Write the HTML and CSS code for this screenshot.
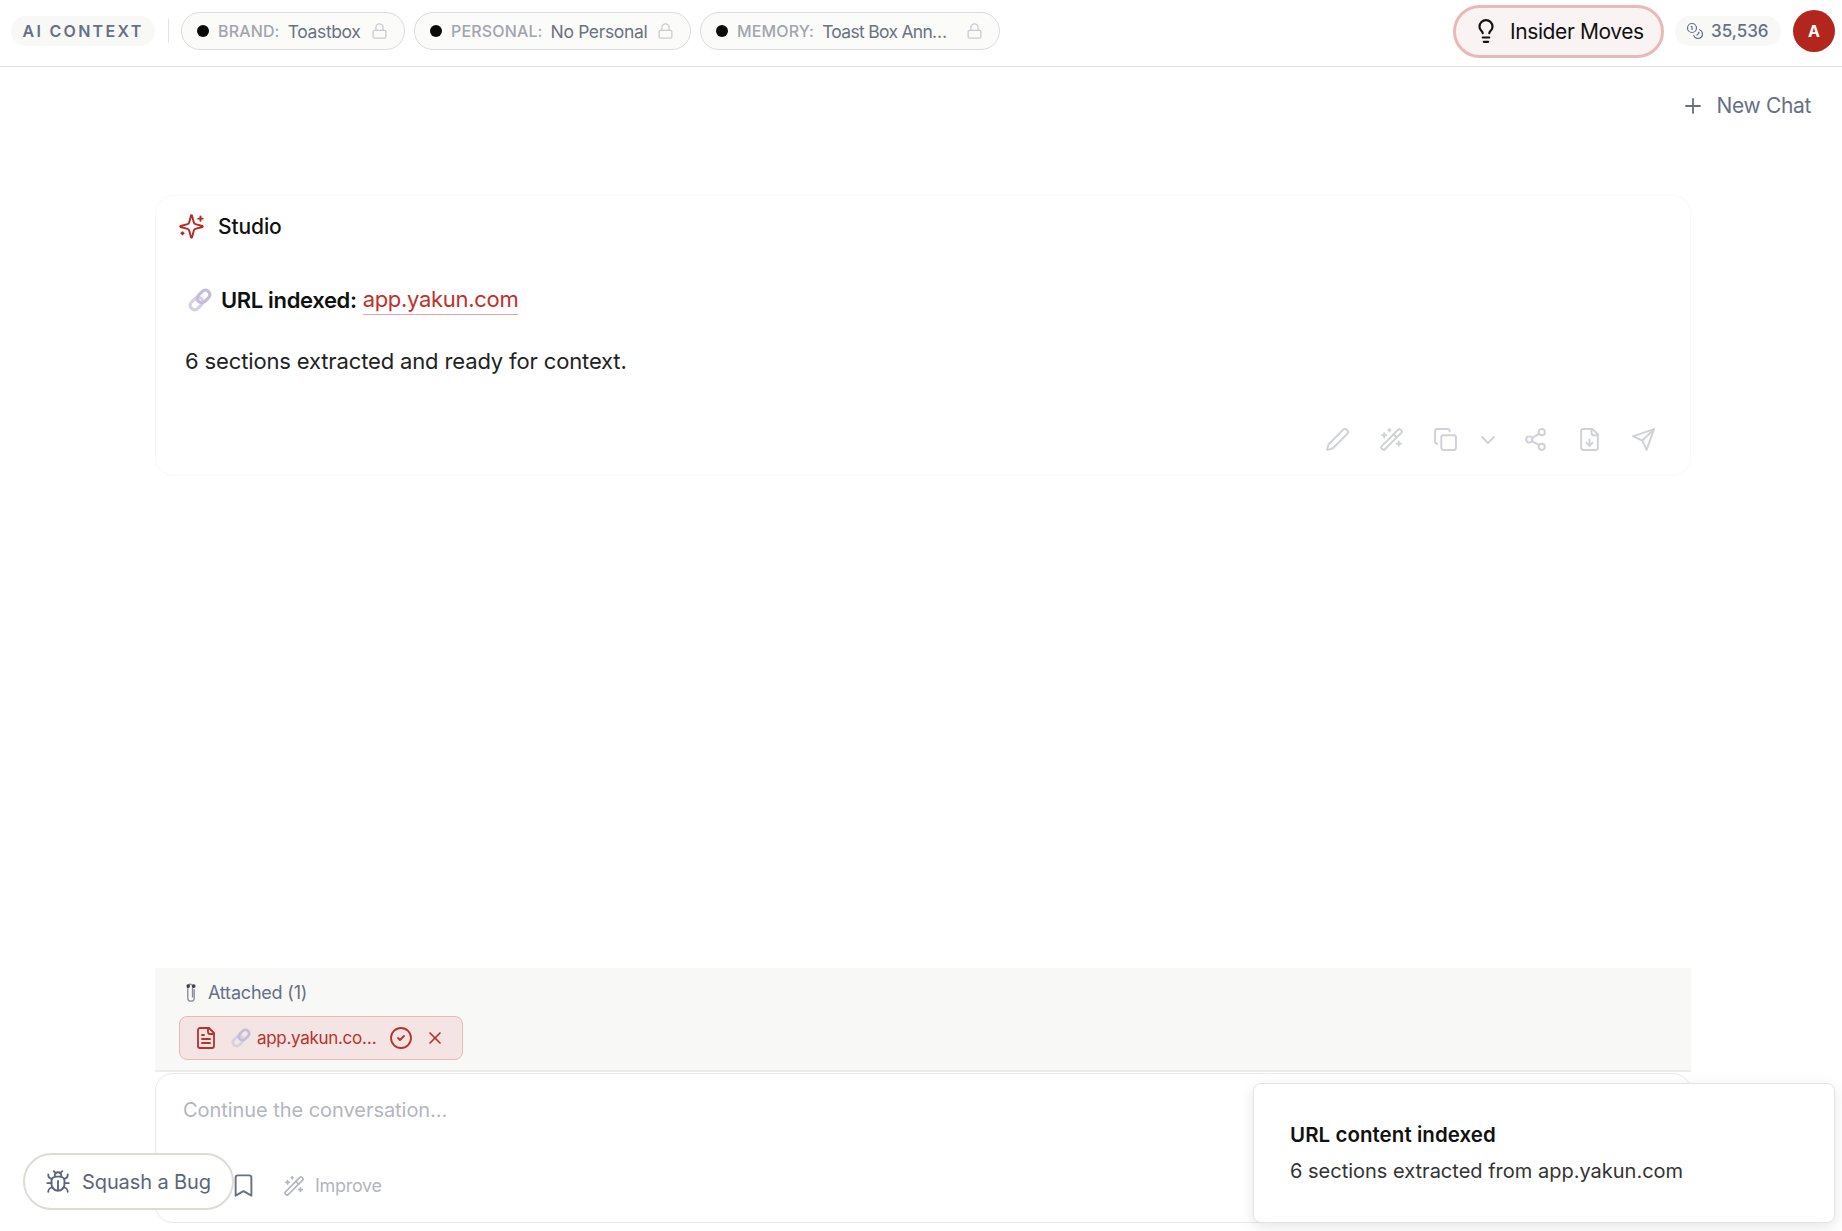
FILE: index.html
```html
<!DOCTYPE html>
<html lang="en">
<head>
<meta charset="utf-8">
<title>Studio</title>
<link rel="stylesheet" href="styles.css">
</head>
<body>
<svg class="sprite" width="0" height="0" aria-hidden="true">
  <symbol id="i-lock" viewBox="0 0 24 24"><rect x="3" y="11" width="18" height="11" rx="2"/><path d="M7 11V7a5 5 0 0 1 10 0v4"/></symbol>
  <symbol id="i-wand" viewBox="0 0 24 24"><path d="m21.64 3.64-1.28-1.28a1.21 1.21 0 0 0-1.72 0L2.36 18.64a1.21 1.21 0 0 0 0 1.72l1.28 1.28a1.2 1.2 0 0 0 1.72 0L21.64 5.36a1.2 1.2 0 0 0 0-1.72"/><path d="m14 7 3 3"/><path d="M5 6v4"/><path d="M19 14v4"/><path d="M10 2v2"/><path d="M7 8H3"/><path d="M21 16h-4"/><path d="M11 3H9"/></symbol>
  <symbol id="i-link" viewBox="0 0 24 24"><g transform="rotate(-45 12 12)"><rect x="0" y="7.500" width="14" height="9" rx="4.500" fill="none" stroke="#d6d0e2" stroke-width="3.200"/><rect x="10" y="7.500" width="14" height="9" rx="4.500" fill="none" stroke="#c4bcd8" stroke-width="3.200"/></g></symbol>
</svg>

<header class="topbar">
  <div class="context-tag">AI CONTEXT</div>
  <span class="top-divider"></span>
  <div class="ctx-pill pill-brand">
    <span class="dot"></span><span class="ctx-label">BRAND:</span><span class="ctx-value">Toastbox</span>
    <svg class="ic ctx-lock"><use href="#i-lock"/></svg>
  </div>
  <div class="ctx-pill pill-personal">
    <span class="dot"></span><span class="ctx-label">PERSONAL:</span><span class="ctx-value">No Personal</span>
    <svg class="ic ctx-lock"><use href="#i-lock"/></svg>
  </div>
  <div class="ctx-pill pill-memory">
    <span class="dot"></span><span class="ctx-label">MEMORY:</span><span class="ctx-value">Toast Box Ann…</span>
    <svg class="ic ctx-lock"><use href="#i-lock"/></svg>
  </div>
  <div class="top-right">
    <button class="insider">
      <svg class="ic insider-ic" viewBox="0 0 24 24"><path d="M15 14c.2-1 .7-1.7 1.5-2.5 1-.9 1.5-2.2 1.5-3.5A6 6 0 0 0 6 8c0 1 .2 2.2 1.5 3.5.7.7 1.3 1.5 1.5 2.5"/><path d="M9 18h6"/><path d="M10 22h4"/></svg>
      Insider Moves
    </button>
    <div class="credits">
      <svg class="ic credits-ic" viewBox="0 0 24 24"><circle cx="8" cy="8" r="6"/><path d="M18.09 10.37A6 6 0 1 1 10.34 18"/><path d="M7 6h1v4"/><path d="m16.71 13.88.7.71-2.82 2.82"/></svg>
      35,536
    </div>
    <div class="avatar">A</div>
  </div>
</header>

<main class="main">
  <div class="newchat-row">
    <button class="newchat">
      <svg class="ic newchat-ic" viewBox="0 0 24 24"><path d="M5 12h14"/><path d="M12 5v14"/></svg>
      New Chat
    </button>
  </div>

  <article class="card">
    <div class="card-head">
      <svg class="ic studio-ic" viewBox="0 0 24 24"><path d="M9.937 15.5A2 2 0 0 0 8.5 14.063l-6.135-1.582a.5.5 0 0 1 0-.962L8.5 9.936A2 2 0 0 0 9.937 8.5l1.582-6.135a.5.5 0 0 1 .963 0L14.063 8.5A2 2 0 0 0 15.5 9.937l6.135 1.581a.5.5 0 0 1 0 .964L15.5 14.063a2 2 0 0 0-1.437 1.437l-1.582 6.135a.5.5 0 0 1-.963 0z"/><path d="M20 3v4"/><path d="M22 5h-4"/><path d="M4 17v2"/><path d="M5 18H3"/></svg>
      <span>Studio</span>
    </div>
    <h2 class="url-line">
      <svg class="emoji-link"><use href="#i-link"/></svg>
      <span>URL indexed:</span>
      <a class="url-link" href="#">app.yakun.com</a>
    </h2>
    <p class="summary">6 sections extracted and ready for context.</p>
    <div class="actions">
      <svg class="ic act" viewBox="0 0 24 24"><path d="M21.174 6.812a1 1 0 0 0-3.986-3.987L3.842 16.174a2 2 0 0 0-.5.83l-1.321 4.352a.5.5 0 0 0 .623.622l4.353-1.32a2 2 0 0 0 .83-.497z"/></svg>
      <svg class="ic act"><use href="#i-wand"/></svg>
      <svg class="ic act act-copy" viewBox="0 0 24 24"><rect x="8" y="8" width="14" height="14" rx="2"/><path d="M4 16c-1.1 0-2-.9-2-2V4c0-1.1.9-2 2-2h10c1.1 0 2 .9 2 2"/></svg>
      <svg class="ic act-chev" viewBox="0 0 24 24"><path d="m6 9 6 6 6-6"/></svg>
      <svg class="ic act" viewBox="0 0 24 24"><circle cx="18" cy="5" r="3"/><circle cx="6" cy="12" r="3"/><circle cx="18" cy="19" r="3"/><path d="m8.59 13.51 6.83 3.98"/><path d="m15.41 6.51-6.82 3.98"/></svg>
      <svg class="ic act" viewBox="0 0 24 24"><path d="M15 2H6a2 2 0 0 0-2 2v16a2 2 0 0 0 2 2h12a2 2 0 0 0 2-2V7Z"/><path d="M14 2v4a2 2 0 0 0 2 2h4"/><path d="M12 18v-6"/><path d="m9 15 3 3 3-3"/></svg>
      <svg class="ic act" viewBox="0 0 24 24"><path d="m22 2-7 20-4-9-9-4Z"/><path d="M22 2 11 13"/></svg>
    </div>
  </article>

  <div class="spacer"></div>

  <section class="attached">
    <div class="attached-head">
      <svg class="clip" viewBox="0 0 16 24"><path d="M11.500 9v9.500a3.500 3.500 0 0 1-7 0V6a2.600 2.600 0 0 1 5.200 0v12" fill="none" stroke="#8b8f96" stroke-width="1.500"/><circle cx="5" cy="5.500" r="2" fill="#3d4047"/><circle cx="11" cy="5.500" r="2" fill="#3d4047"/></svg>
      <span>Attached (1)</span>
    </div>
    <div class="chip">
      <svg class="ic chip-doc" viewBox="0 0 24 24"><path d="M15 2H6a2 2 0 0 0-2 2v16a2 2 0 0 0 2 2h12a2 2 0 0 0 2-2V7Z"/><path d="M14 2v4a2 2 0 0 0 2 2h4"/><path d="M10 9H8"/><path d="M16 13H8"/><path d="M16 17H8"/></svg>
      <svg class="chip-link"><use href="#i-link"/></svg>
      <span class="chip-name">app.yakun.co…</span>
      <svg class="ic chip-check" viewBox="0 0 24 24"><circle cx="12" cy="12" r="10"/><path d="m9 12 2 2 4-4"/></svg>
      <svg class="ic chip-x" viewBox="0 0 24 24"><path d="M18 6 6 18"/><path d="m6 6 12 12"/></svg>
    </div>
  </section>

  <section class="composer">
    <div class="placeholder">Continue the conversation...</div>
    <div class="composer-tools">
      <svg class="ic bookmark" viewBox="0 0 24 24"><path d="m19 21-7-4-7 4V5a2 2 0 0 1 2-2h10a2 2 0 0 1 2 2v16z"/></svg>
      <span class="improve"><svg class="ic improve-ic"><use href="#i-wand"/></svg>Improve</span>
    </div>
  </section>
</main>

<button class="bug">
  <svg class="ic bug-ic" viewBox="0 0 24 24"><path d="m8 2 1.880 1.880"/><path d="M14.120 3.880 16 2"/><path d="M9 7.130v-1a3.003 3.003 0 1 1 6 0v1"/><path d="M12 20c-3.300 0-6-2.700-6-6v-3a4 4 0 0 1 4-4h4a4 4 0 0 1 4 4v3c0 3.300-2.700 6-6 6"/><path d="M12 20v-9"/><path d="M6.530 9C4.600 8.800 3 7.100 3 5"/><path d="M6 13H2"/><path d="M3 21c0-2.100 1.700-3.900 3.800-4"/><path d="M20.970 5c0 2.100-1.600 3.800-3.500 4"/><path d="M22 13h-4"/><path d="M17.200 17c2.100.1 3.800 1.900 3.800 4"/></svg>
  Squash a Bug
</button>

<aside class="toast">
  <div class="toast-title">URL content indexed</div>
  <div class="toast-desc">6 sections extracted from app.yakun.com</div>
</aside>
</body>
</html>
```

FILE: styles.css
```css
* { box-sizing: border-box; }
html, body { margin: 0; height: 100%; }
body {
  position: relative;
  width: 1842px;
  height: 1231px;
  overflow: hidden;
  display: flex;
  flex-direction: column;
  background: #fff;
  color: #111;
  font-family: Inter, "Noto Sans", sans-serif;
}
.sprite { position: absolute; }
button { font: inherit; background: none; border: 0; padding: 0; }
.ic { fill: none; stroke: currentColor; stroke-width: 2; stroke-linecap: round; stroke-linejoin: round; flex: none; }

/* top bar */
.topbar {
  height: 67px;
  flex: none;
  display: flex;
  align-items: center;
  padding: 0 7px 4px 11px;
  border-bottom: 1px solid #e2e2e2;
}
.context-tag {
  width: 144px;
  height: 30px;
  border-radius: 15px;
  background: #f8f8f7;
  display: flex;
  align-items: center;
  justify-content: center;
  font-size: 16px;
  font-weight: 600;
  letter-spacing: 2.300px;
  color: #667085;
  white-space: nowrap;
}
.top-divider { width: 1px; height: 24px; background: #e2e2e2; margin: 0 12px 0 13px; }
.ctx-pill {
  height: 38px;
  margin-right: 9px;
  padding: 0 16px 0 15px;
  border: 1px solid #dcdcdc;
  border-radius: 19px;
  background: #fbfbfa;
  display: flex;
  align-items: center;
  white-space: nowrap;
}
.pill-brand { width: 224px; }
.pill-personal { width: 277px; }
.pill-memory { width: 300px; }
.dot { width: 12px; height: 12px; border-radius: 50%; background: #0a0a0a; margin-right: 9px; }
.ctx-label { font-size: 16px; letter-spacing: .15px; color: #a1a5ae; font-weight: 500; margin-right: 8px; }
.ctx-value { font-size: 17.500px; letter-spacing: -.35px; color: #6b7280; }
.pill-memory .ctx-value { letter-spacing: -.7px; }
.ctx-lock { width: 17px; height: 18px; margin-left: auto; color: #c9cbd0; stroke-width: 1.800; }
.top-right { margin-left: auto; display: flex; align-items: center; }
.insider {
  width: 211px;
  height: 53px;
  border: 3px solid #e9b9b7;
  border-radius: 27px;
  background: #f9f3f3;
  display: flex;
  align-items: center;
  gap: 11px;
  padding-left: 17px;
  font-size: 21px;
  font-weight: 400;
  letter-spacing: -.4px;
  color: #111;
}
.insider-ic { width: 26px; height: 26px; }
.credits {
  width: 106px;
  height: 30px;
  margin-left: 11px;
  border-radius: 15px;
  background: #f8f8f7;
  display: flex;
  align-items: center;
  gap: 7px;
  padding-left: 11px;
  font-size: 17px;
  font-weight: 500;
  color: #667085;
}
.credits-ic { width: 18px; height: 18px; stroke-width: 1.600; }
.avatar {
  width: 42px;
  height: 42px;
  margin-left: 12px;
  border-radius: 50%;
  background: #b3261e;
  color: #fff;
  font-size: 16px;
  font-weight: 700;
  display: flex;
  align-items: center;
  justify-content: center;
}

/* main column */
.main { flex: 1; min-height: 0; display: flex; flex-direction: column; padding: 0 151px 8px 155px; }
.newchat-row { height: 128px; flex: none; position: relative; }
.newchat {
  position: absolute;
  right: -120px;
  top: 26px;
  display: flex;
  align-items: center;
  gap: 12px;
  font-size: 21px;
  color: #667085;
  letter-spacing: -.35px;
  white-space: nowrap;
}
.newchat-ic { width: 24px; height: 24px; stroke-width: 1.800; }

.card {
  height: 281px;
  flex: none;
  border: 1px solid #f8f8f8;
  border-radius: 18px;
  padding: 16px 34px 0 24px;
  display: flex;
  flex-direction: column;
}
.card-head { display: flex; align-items: center; gap: 13.500px; font-size: 21px; font-weight: 500; letter-spacing: -.1px; height: 28px; margin-left: -2.500px; }
.studio-ic { width: 27px; height: 27px; color: #b52a22; stroke-width: 1.700; }
.url-line {
  margin: 45px 0 0 8px;
  display: flex;
  align-items: center;
  height: 30px;
  font-size: 22px;
  font-weight: 600;
  letter-spacing: -.35px;
  white-space: nowrap;
}
.emoji-link { width: 24px; height: 24px; margin-right: 9px; flex: none; }
.url-link { color: #c0302a; font-weight: 400; letter-spacing: -.3px; text-decoration: none; border-bottom: 1px solid #e6a3a0; margin-left: 6px; line-height: 29px; }
.summary { margin: 31px 0 0 5px; font-size: 22px; line-height: 30px; letter-spacing: -.14px; color: #222; }
.actions { margin-top: auto; margin-bottom: 23px; display: flex; align-items: center; justify-content: flex-end; gap: 29px; color: #d0d2d7; }
.act { width: 25px; height: 25px; stroke-width: 1.900; flex: none; }
.act-copy { margin-right: -10.500px; }
.act-chev { width: 24px; height: 24px; stroke-width: 1.900; margin-right: -5.500px; margin-left: -.500px; }

.spacer { flex: 1; }

.attached {
  height: 104px;
  flex: none;
  background: #f8f8f7;
  border-bottom: 2px solid #ececea;
  padding: 11px 0 0 24px;
}
.attached-head { display: flex; align-items: center; gap: 9px; height: 26px; font-size: 18px; letter-spacing: -.2px; color: #667085; }
.clip { width: 16px; height: 22px; margin-left: 4px; }
.chip {
  width: 284px;
  height: 44px;
  margin-top: 11px;
  border: 1px solid #e8b9b7;
  border-radius: 8px;
  background: #f4e4e4;
  display: flex;
  align-items: center;
  padding-left: 14px;
  color: #b9312b;
}
.chip-doc { width: 24px; height: 24px; stroke-width: 1.800; }
.chip-link { width: 20px; height: 20px; margin-left: 13px; }
.chip-name { font-size: 17px; letter-spacing: -.3px; margin-left: 6px; width: 131.500px; white-space: nowrap; }
.chip-check { width: 24px; height: 24px; stroke-width: 1.800; }
.chip-x { width: 20px; height: 20px; margin-left: 12.500px; stroke-width: 2; }

.composer {
  height: 150px;
  flex: none;
  margin-top: 1px;
  border: 1px solid #e9e9e9;
  border-radius: 18px;
  padding: 23px 27px 0;
  display: flex;
  flex-direction: column;
}
.placeholder { font-size: 20px; line-height: 26px; letter-spacing: -.05px; color: #b3b6bd; }
.composer-tools { margin: 49px 0 0 46.500px; display: flex; align-items: center; gap: 26.500px; }
.bookmark { width: 27px; height: 27px; color: #667085; stroke-width: 1.700; }
.improve { display: flex; align-items: center; gap: 10px; font-size: 18px; letter-spacing: -.3px; color: #b3b6bd; }
.improve-ic { width: 22px; height: 22px; stroke-width: 1.800; }

/* floating layer */
.bug {
  position: absolute;
  left: 23px;
  top: 1153px;
  width: 211px;
  height: 57px;
  border: 2px solid #dddcd5;
  border-radius: 29px;
  background: #fff;
  display: flex;
  align-items: center;
  gap: 11px;
  padding-left: 20px;
  font-size: 20px;
  letter-spacing: -.1px;
  color: #5b6578;
  white-space: nowrap;
}
.bug-ic { width: 26px; height: 26px; stroke-width: 1.700; }
.toast {
  position: absolute;
  left: 1253px;
  top: 1083px;
  width: 582px;
  height: 140px;
  padding: 37px 36px 0;
  border: 1px solid #e3e3e3;
  border-radius: 8px;
  background: #fff;
  box-shadow: 0 4px 14px rgba(0, 0, 0, .1);
}
.toast-title { font-size: 20.500px; font-weight: 600; line-height: 28px; letter-spacing: .05px; color: #111; }
.toast-desc { margin-top: 8px; font-size: 20px; line-height: 28px; letter-spacing: 0; color: #333; }
```
